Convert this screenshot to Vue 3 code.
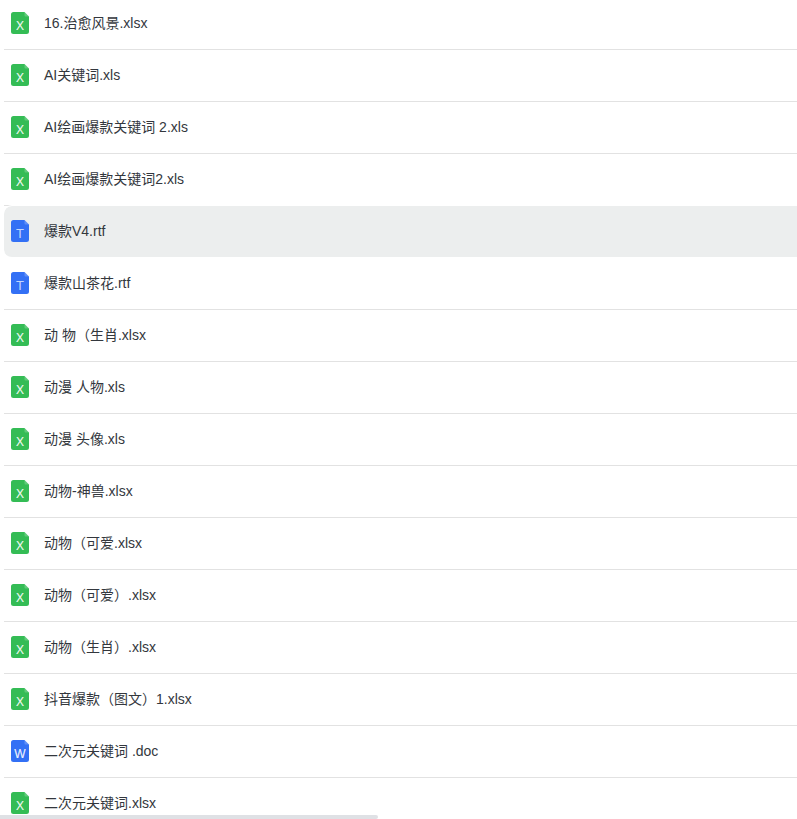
<script setup>
const files = [
  ['16.治愈风景.xlsx', 'x'],
  ['AI关键词.xls', 'x'],
  ['AI绘画爆款关键词 2.xls', 'x'],
  ['AI绘画爆款关键词2.xls', 'x'],
  ['爆款V4.rtf', 't', true],
  ['爆款山茶花.rtf', 't'],
  ['动 物（生肖.xlsx', 'x'],
  ['动漫 人物.xls', 'x'],
  ['动漫 头像.xls', 'x'],
  ['动物-神兽.xlsx', 'x'],
  ['动物（可爱.xlsx', 'x'],
  ['动物（可爱）.xlsx', 'x'],
  ['动物（生肖）.xlsx', 'x'],
  ['抖音爆款（图文）1.xlsx', 'x'],
  ['二次元关键词 .doc', 'w'],
  ['二次元关键词.xlsx', 'x'],
]
const colors = { x: '#34bc55', t: '#3370f5', w: '#3370f5' }
</script>

<template>
  <div class="page">
    <ul class="list">
      <li v-for="f in files" :key="f[0]" class="row" :class="{ active: f[2] }">
        <svg class="icon" width="18" height="22" viewBox="0 0 18 22">
          <path d="M2.500 0H13.500L18 4.500V19.500A2.500 2.500 0 0 1 15.500 22H2.500A2.500 2.500 0 0 1 0 19.500V2.500A2.500 2.500 0 0 1 2.500 0Z" :fill="colors[f[1]]" />
          <path d="M13.500 0L18 4.500H14.500A1 1 0 0 1 13.500 3.500Z" fill="#fff" fill-opacity=".22" />
          <text x="9" y="17.500" text-anchor="middle" class="glyph" :class="f[1]">{{ f[1] === 't' ? 'T' : f[1] === 'w' ? 'W' : 'X' }}</text>
        </svg>
        <span class="name">{{ f[0] }}</span>
      </li>
    </ul>
    <div class="scrollbar"></div>
  </div>
</template>

<style scoped>
.page {
  position: relative;
  width: 797px;
  height: 819px;
  overflow: hidden;
  background: #fff;
}
.list {
  list-style: none;
  margin: -2px 0 0 4px;
  padding: 0;
}
.row {
  display: flex;
  align-items: center;
  height: 52px;
  box-sizing: border-box;
  padding: 0 0 2px 7px;
  border-bottom: 1px solid #e2e2e2;
}
.row.active {
  background: #eceeee;
  background-clip: padding-box;
  border-bottom-color: transparent;
  border-radius: 8px 0 0 8px;
  box-shadow: 0 -1px 0 #fff;
}
.icon {
  flex: none;
  margin-top: 1px;
}
.glyph {
  font: 12px "Liberation Sans", sans-serif;
  fill: #fff;
  fill-opacity: .92;
  stroke: #fff;
  stroke-width: .2;
  stroke-opacity: .6;
}
.glyph.t {
  font-size: 13px;
  fill-opacity: .72;
  stroke-width: 0;
}
.name {
  margin-left: 15px;
  font: 14px/20px "Liberation Sans", "Noto Sans CJK SC", sans-serif;
  color: #33373d;
}
.scrollbar {
  position: absolute;
  left: 0;
  bottom: 0;
  width: 378px;
  height: 4px;
  background: #dfe1e5;
  border-radius: 0 3px 3px 0;
}
</style>
<style>
html, body { margin: 0; overflow: hidden; }
</style>
